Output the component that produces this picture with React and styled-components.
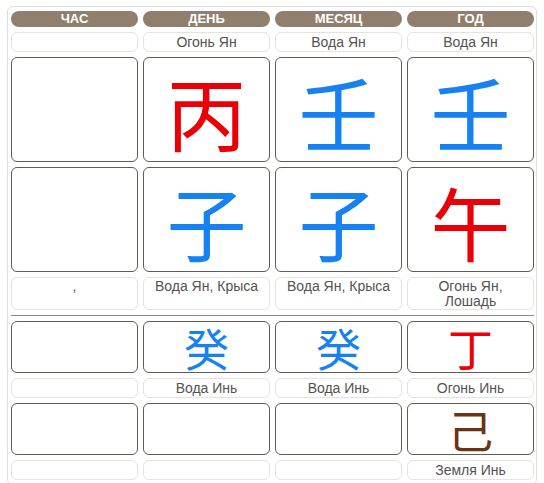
import React from 'react';
import styled, { createGlobalStyle } from 'styled-components';

const GlobalStyle = createGlobalStyle`
    html, body {
        margin: 0;
        padding: 0;
        background: #ffffff;
    }
    * {
        box-sizing: border-box;
    }
`

const Page = styled.div`
    padding: 6px 0 0 7px;
    font-family: 'Liberation Sans', Arial, sans-serif;
`

const Frame = styled.div`
    width: 530px;
    border: 1px solid #e2ddd8;
    border-radius: 6px;
    padding: 4px 2px 4px 3px;
`

const Grid = styled.div`
    display: grid;
    grid-template-columns: repeat(4, 127px);
    grid-template-rows: 16px 20px 105px 105px 33px 1px 52px 20px 52px 20px;
    gap: 5px;
`

const Head = styled.div`
    background: #907f6d;
    border-radius: 8px;
    color: #ffffff;
    font-weight: bold;
    font-size: 13px;
    line-height: 16px;
    text-align: center;
    text-transform: uppercase;
`

const Label = styled.div`
    border: 1px solid #e6e2de;
    border-radius: 6px;
    color: #555250;
    font-size: 14px;
    line-height: 15px;
    text-align: center;
    padding: ${props => props.top ? '1px 4px 0' : '1px 4px 0'};
    display: flex;
    align-items: ${props => props.top ? 'flex-start' : 'center'};
    justify-content: center;
    overflow: hidden;
`

const Cell = styled.div`
    border: 1px solid #615b55;
    border-radius: 6px;
    display: flex;
    align-items: center;
    justify-content: center;
    font-family: 'Noto Sans CJK SC', 'Noto Sans CJK JP', sans-serif;
    font-size: ${props => props.small ? '45px' : '80px'};
    line-height: 1;
    color: ${props => props.color || '#000'};
`

const Rule = styled.div`
    grid-column: 1 / -1;
    border-top: 1px solid #8c8884;
`

const RED = '#ec0008';
const BLUE = '#1682f2';
const BROWN = '#6a3415';

const heads = ['час', 'день', 'месяц', 'год'];
const elements = ['', 'Огонь Ян', 'Вода Ян', 'Вода Ян'];
const stems = [null, ['丙', RED], ['壬', BLUE], ['壬', BLUE]];
const branches = [null, ['子', BLUE], ['子', BLUE], ['午', RED]];
const branchLabels = [',', 'Вода Ян, Крыса', 'Вода Ян, Крыса', 'Огонь Ян, Лошадь'];
const hidden1 = [null, ['癸', BLUE], ['癸', BLUE], ['丁', RED]];
const hidden1Labels = ['', 'Вода Инь', 'Вода Инь', 'Огонь Инь'];
const hidden2 = [null, null, null, ['己', BROWN]];
const hidden2Labels = ['', '', '', 'Земля Инь'];

const renderCells = (list, small) => list.map((c, i) => (
    <Cell key={i} small={small} color={c ? c[1] : null}>{c ? c[0] : ''}</Cell>
));

const renderLabels = (list, top) => list.map((t, i) => (
    <Label key={i} top={top}>{t}</Label>
));

export default function App() {
    return (
        <Page>
            <GlobalStyle />
            <Frame>
                <Grid>
                    {heads.map(h => <Head key={h}>{h}</Head>)}
                    {renderLabels(elements)}
                    {renderCells(stems)}
                    {renderCells(branches)}
                    {renderLabels(branchLabels, true)}
                    <Rule />
                    {renderCells(hidden1, true)}
                    {renderLabels(hidden1Labels)}
                    {renderCells(hidden2, true)}
                    {renderLabels(hidden2Labels)}
                </Grid>
            </Frame>
        </Page>
    );
}
